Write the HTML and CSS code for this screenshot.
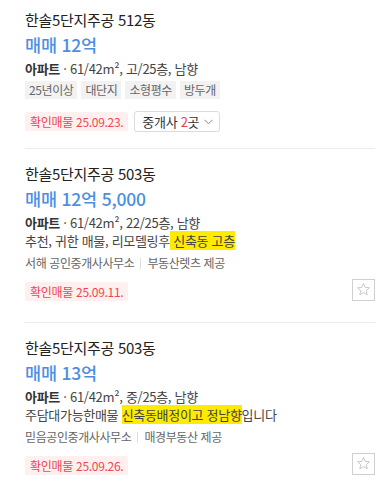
FILE: index.html
```html
<!DOCTYPE html>
<html lang="ko">
<head>
<meta charset="utf-8">
<link rel="stylesheet" href="styles.css">
</head>
<body>
<div class="list">
  <div class="item first">
    <div class="title">한솔5단지주공 512동</div>
    <div class="price">매매 12억</div>
    <div class="info"><b>아파트</b> · 61/42m², 고/25층, 남향</div>
    <div class="tags">
      <span class="tag">25년이상</span>
      <span class="tag">대단지</span>
      <span class="tag">소형평수</span>
      <span class="tag">방두개</span>
    </div>
    <div class="bottom">
      <span class="badge">확인매물 25.09.23.</span>
      <button class="agents-btn">중개사 <em>2</em>곳<svg class="chev" width="9" height="6" viewBox="0 0 9 6"><path d="M0.5 0.8 L4.5 4.8 L8.5 0.8" fill="none" stroke="#888" stroke-width="1"/></svg></button>
    </div>
  </div>
  <div class="item">
    <div class="title">한솔5단지주공 503동</div>
    <div class="price">매매 12억 5,000</div>
    <div class="info"><b>아파트</b> · 61/42m², 22/25층, 남향</div>
    <div class="desc">추천, 귀한 매물, 리모델링후<mark> 신축동 고층</mark></div>
    <div class="agent">서해 공인중개사사무소<span class="sep"></span>부동산렛츠 제공</div>
    <div class="bottom">
      <span class="badge">확인매물 25.09.11.</span>
      <button class="star-btn"><svg width="15" height="15" viewBox="0 0 24 24"><path d="M12 2.5 L14.8 8.6 L21.4 9.3 L16.4 13.8 L17.9 20.4 L12 17 L6.1 20.4 L7.6 13.8 L2.6 9.3 L9.2 8.6 Z" fill="none" stroke="#bbb" stroke-width="1.3" stroke-linejoin="round"/></svg></button>
    </div>
  </div>
  <div class="item">
    <div class="title">한솔5단지주공 503동</div>
    <div class="price">매매 13억</div>
    <div class="info"><b>아파트</b> · 61/42m², 중/25층, 남향</div>
    <div class="desc">주담대가능한매물 <mark>신축동배정이고 정남향</mark>입니다</div>
    <div class="agent">믿음공인중개사사무소<span class="sep"></span>매경부동산 제공</div>
    <div class="bottom">
      <span class="badge">확인매물 25.09.26.</span>
      <button class="star-btn"><svg width="15" height="15" viewBox="0 0 24 24"><path d="M12 2.5 L14.8 8.6 L21.4 9.3 L16.4 13.8 L17.9 20.4 L12 17 L6.1 20.4 L7.6 13.8 L2.6 9.3 L9.2 8.6 Z" fill="none" stroke="#bbb" stroke-width="1.3" stroke-linejoin="round"/></svg></button>
    </div>
  </div>
</div>
</body>
</html>
```
FILE: styles.css
```css
* { box-sizing: border-box; }
html, body { margin: 0; padding: 0; background: #fff; }
body {
  font-family: "Noto Sans CJK KR", "Noto Sans", sans-serif;
  color: #222;
  width: 387px;
  height: 487px;
  overflow: hidden;
}
.list { padding: 0 12px 0 25px; }
.item {
  padding: 14px 0 21px;
  border-bottom: 1px solid #ececec;
}
.item.first { padding: 9px 0 16px; }
.title {
  font-size: 15px;
  line-height: 22px;
  letter-spacing: -0.3px;
  color: #222;
}
.price {
  font-size: 17.5px;
  line-height: 24px;
  margin-top: 2px;
  color: #4a8fe3;
  font-weight: 500;
  letter-spacing: -0.2px;
}
.info {
  font-size: 13px;
  line-height: 20px;
  margin-top: 2px;
  color: #444;
  letter-spacing: -0.3px;
}
.info b { font-weight: 700; color: #333; }
.tags {
  display: flex;
  gap: 4px;
  margin-top: 2px;
}
.tag {
  font-size: 12px;
  line-height: 18px;
  padding: 0 4px;
  background: #f2f2f2;
  color: #666;
  letter-spacing: -0.4px;
}
.desc {
  font-size: 13px;
  line-height: 20px;
  margin-top: -2px;
  color: #444;
  letter-spacing: -0.3px;
}
.desc mark { background: #ffeb00; color: #444; }
.agent {
  font-size: 12px;
  line-height: 18px;
  margin-top: 3px;
  color: #666;
  letter-spacing: -0.4px;
  display: flex;
  align-items: center;
}
.sep {
  width: 1px;
  height: 11px;
  background: #ddd;
  margin: 0 6px;
}
.bottom {
  display: flex;
  align-items: center;
  justify-content: space-between;
  margin-top: 10px;
}
.item.first .bottom { justify-content: flex-start; gap: 6px; margin-top: 12px; }
.badge {
  font-size: 12px;
  line-height: 19px;
  padding: 0 5px;
  background: #fff0f0;
  color: #f0464f;
  border-radius: 2px;
  letter-spacing: -0.3px;
}
.agents-btn {
  font-family: inherit;
  font-size: 13px;
  line-height: 19px;
  height: 21px;
  padding: 0 6px 0 7px;
  border: 1px solid #dcdcdc;
  border-radius: 3px;
  background: #fff;
  color: #333;
  display: block;
  white-space: nowrap;
  letter-spacing: -0.3px;
}
.agents-btn em { font-style: normal; color: #e8404a; }
.chev { margin-left: 5px; vertical-align: 2px; }
.star-btn {
  width: 23px;
  height: 22px;
  padding: 0;
  border: 1px solid #d0d0d0;
  background: #fff;
  display: flex;
  align-items: center;
  justify-content: center;
  margin-top: -4px;
}
```
